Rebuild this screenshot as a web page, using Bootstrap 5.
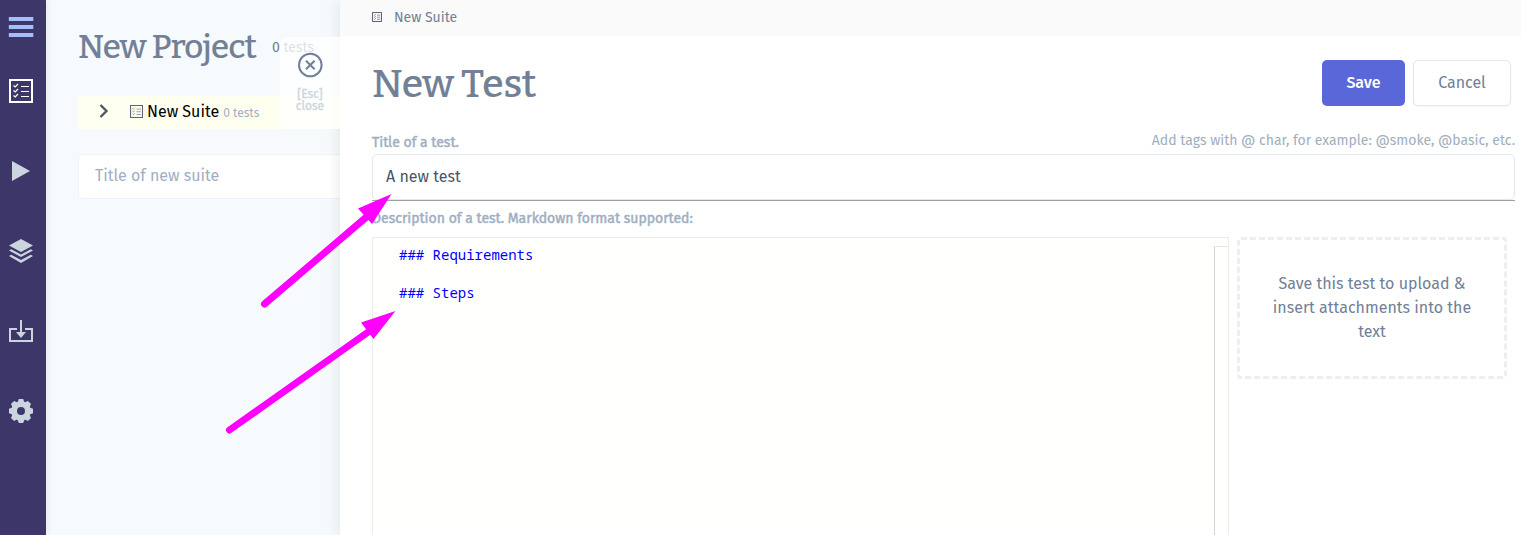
<!DOCTYPE html>
<html lang="en">
<head>
<meta charset="utf-8">
<meta name="viewport" content="width=device-width, initial-scale=1">
<title>New Test</title>
<link href="https://cdn.jsdelivr.net/npm/bootstrap@5.3.0/dist/css/bootstrap.min.css" rel="stylesheet">
<style>
body{font-family:"Fira Sans","Noto Sans",sans-serif;font-size:16px;line-height:24px;color:#718096;background:#f7fafc}
.app{height:535px}
.rail{width:46px;background:#3d3668;box-shadow:0 0 8px rgba(0,0,0,.1);padding:11px 4px 0 0;gap:48px;z-index:1}
.rail a{height:32px;color:#cbd5e0}
.rail a:first-child{margin-bottom:-15px}
.rail a svg{display:block;margin-top:3px}
.project{width:294px;padding-left:32px;background:#f7fafc}
.slab{font-family:"Bitter","Merriweather","Noto Serif","DejaVu Serif",serif;font-weight:500;margin:0;-webkit-text-stroke:.15px #718096;white-space:nowrap}
.slab-p{font-size:33px;line-height:40px;width:194px;letter-spacing:-.6px}
.slab-t{font-size:39px;line-height:46px;padding-top:1px;letter-spacing:-.2px}
.head-p{padding-top:27px;height:96px}
.count{font-size:14px}
.suite-row{height:33px;background:#fffff0;color:#000;padding:0 0 2px 20px}
.suite-row small{font-size:12px;color:#a0aec0;margin:3px 0 0 4px}
.field-new{height:45px;margin-top:25px;border:1px solid #ebf4ff;border-right:0;border-radius:4px 0 0 4px;background:#fff;padding:0 0 2px 16px;color:#a0aec0}
.esc{left:280px;top:37px;width:60px;height:92px;background:rgba(255,255,255,.76);border-radius:8px 0 0 8px;z-index:2;padding-top:15px}
.esc span{font-size:12px;line-height:12px;color:#cbd5e0;-webkit-text-stroke:.3px #cbd5e0;margin-top:10px}
.sheet{background:#fff;box-shadow:0 0 15px rgba(0,0,0,.1);z-index:1}
.crumb{height:36px;background:#fafafa;padding:0 0 2px 32px;gap:12px;font-size:14px}
.crumb span{margin-top:1px}
.sheet-body{padding:24px 6px 0 32px}
.head-t{height:46px;padding-right:4px;gap:8px}
.act{height:46px;border-radius:5px;font-size:16px;padding:0;line-height:24px}
.act-save,.act-save:hover{width:83px;background:#5a67d8;color:#fff;border:0;font-weight:500}
.act-cancel{width:98px;border:1px solid #e2e8f0;color:#718096;background:#fff;box-shadow:0 1px 2px rgba(0,0,0,.05)}
.labels{height:48px;padding-top:25px;color:#a0aec0;font-size:14px;line-height:24px}
.lbl{-webkit-text-stroke:.45px #a0aec0}
.title-wrap{border-bottom:1px solid #a0a0a0}
.title-field{height:46px;border:1px solid #e2e8f0;border-radius:5px;padding:0 0 1px 13px;color:#4a5568}
.desc{height:36px;line-height:36px;font-size:14px;color:#a0aec0}
.work{gap:9px}
.editor{width:857px;height:298px;border:1px solid #ebebeb;border-bottom:0;background:#fffffe;padding-top:8px}
.code{font:14px/19px "Droid Sans Mono","Noto Sans Mono","Noto Mono","DejaVu Sans Mono",monospace;color:#00f;margin:-1px 0 0;padding-left:26px;width:841px}
.ruler{width:14px;border-left:1px solid #d4d4d4;border-top:1px solid #e6e6e6}
.upload{width:270px;height:142px;border:3px dashed #eee;border-radius:4px;padding:32px 0 0;margin-left:-1px;text-align:center}
.arrows{left:0;top:0;z-index:5;pointer-events:none}
</style>
</head>
<body>
<div class="app d-flex position-relative overflow-hidden">
<svg width="0" height="0" class="position-absolute"><defs>
<symbol id="list" viewBox="0 0 24 24"><path d="M1 1h22v22H1z" fill="none" stroke="currentColor" stroke-width="2"/><path d="M4.500 6.500l1.700 1.500L9 5M4.500 11.500l1.700 1.500L9 10M4.500 16.500l1.700 1.500L9 15M12 7.500h8M12 12.500h8M12 17.500h8" fill="none" stroke="currentColor" stroke-width="1.200"/></symbol>
</defs></svg>
<nav class="rail d-flex flex-column align-items-center flex-shrink-0">
<a href="#" aria-label="Menu"><svg width="26" height="26" viewBox="0 0 26 26" fill="#a3bffa"><path d="M.8 3h24.500v4H.8zM.8 11h24.500v4H.8zM.8 19h24.500v4H.8z"/></svg></a>
<a href="#" class="text-white" aria-label="Tests"><svg width="24" height="24"><use href="#list"/></svg></a>
<a href="#" aria-label="Runs"><svg width="24" height="24" fill="currentColor"><path d="M3 2l18 10L3 22z"/></svg></a>
<a href="#" aria-label="Plans"><svg width="24" height="24" fill="currentColor"><path d="M12 0l12 6.500L12 13 0 6.500zM2.200 10.200L12 15.500l9.800-5.300L24 11.500 12 18 0 11.500zM2.200 15.800L12 21.100l9.800-5.300L24 17.100 12 24 0 17.100z"/></svg></a>
<a href="#" aria-label="Imports"><svg width="26" height="24" fill="none" stroke="currentColor" stroke-width="2"><path d="M9 10H2v12h22V10h-7M13 1v13"/><path d="M8 13h10l-5 6z" fill="currentColor" stroke="none"/></svg></a>
<a href="#" aria-label="Settings"><svg width="24" height="24" viewBox="0 0 24 24" fill="currentColor"><path fill-rule="evenodd" d="M24 14.187v-4.374c-2.148-.766-2.726-.802-3.027-1.529-.303-.729.083-1.169 1.059-3.223l-3.093-3.093c-2.026.963-2.488 1.364-3.224 1.059-.727-.302-.768-.889-1.527-3.027h-4.375c-.764 2.144-.800 2.725-1.529 3.027-.752.313-1.203-.100-3.223-1.059l-3.093 3.093c.977 2.055 1.362 2.493 1.059 3.224-.302.727-.881.764-3.027 1.528v4.375c2.139.760 2.725.800 3.027 1.528.304.734-.081 1.167-1.059 3.223l3.093 3.093c1.999-.950 2.470-1.373 3.223-1.059.728.302.764.880 1.529 3.027h4.374c.758-2.131.799-2.723 1.537-3.031.745-.308 1.186.099 3.215 1.062l3.093-3.093c-.975-2.050-1.362-2.492-1.059-3.223.300-.726.880-.763 3.027-1.528zM12 16a4 4 0 1 1 0-8 4 4 0 0 1 0 8z"/></svg></a>
</nav>
<section class="project flex-shrink-0">
<div class="head-p d-flex"><h1 class="slab slab-p">New Project</h1><span class="count pt-2 mt-1 lh-sm text-nowrap">0 tests</span></div>
<div class="suite-row d-flex align-items-center">
<svg width="12" height="16" fill="none" stroke="#4a5568" stroke-width="2.300"><path d="M2.500 1l6 6-6 6"/></svg>
<svg width="13" height="13" color="#5c6678" style="margin:0 4px 0 20px"><use href="#list"/></svg>
<span class="suite-name">New Suite</span><small>0 tests</small>
</div>
<div class="field-new d-flex align-items-center"><span>Title of new suite</span></div>
</section>
<div class="esc position-absolute d-flex flex-column align-items-center">
<svg width="26" height="26" fill="none" stroke="#718096" stroke-width="2"><circle cx="13.300" cy="13" r="11.300"/><path d="M9 8.700l8.600 8.600M17.600 8.700l-8.600 8.600"/></svg>
<span class="text-center">[Esc]<br>close</span>
</div>
<main class="sheet flex-grow-1">
<div class="crumb d-flex align-items-center"><svg width="10" height="10" color="#2d3748"><use href="#list"/></svg><span>New Suite</span></div>
<div class="sheet-body">
<div class="head-t d-flex align-items-center"><h2 class="slab slab-t me-auto">New Test</h2><button class="btn act act-save">Save</button><button class="btn act act-cancel">Cancel</button></div>
<div class="labels d-flex justify-content-between"><span class="lbl">Title of a test.</span><span style="margin-top:-2px">Add tags with @ char, for example: @smoke, @basic, etc.</span></div>
<div class="title-wrap"><div class="title-field d-flex align-items-center"><span>A new test</span></div></div>
<div class="desc"><span class="lbl">Description of a test. Markdown format supported:</span></div>
<div class="work d-flex align-items-start">
<div class="editor d-flex"><pre class="code">### Requirements

### Steps</pre><div class="ruler"></div></div>
<div class="upload">Save this test to upload &amp;<br>insert attachments into the<br>text</div>
</div>
</div>
</main>
<svg class="arrows position-absolute" width="450" height="450" fill="#f0f" stroke="#f0f"><path d="M264.500 304L370 214M229.500 430L371 330" stroke-width="7" stroke-linecap="round"/><path stroke="none" d="M391.500 194L358 208.500l14 15.500zM395.500 311L361 322.500l12.500 16.500z"/></svg>
</div>
<script src="https://cdn.jsdelivr.net/npm/bootstrap@5.3.0/dist/js/bootstrap.bundle.min.js"></script>
</body>
</html>
